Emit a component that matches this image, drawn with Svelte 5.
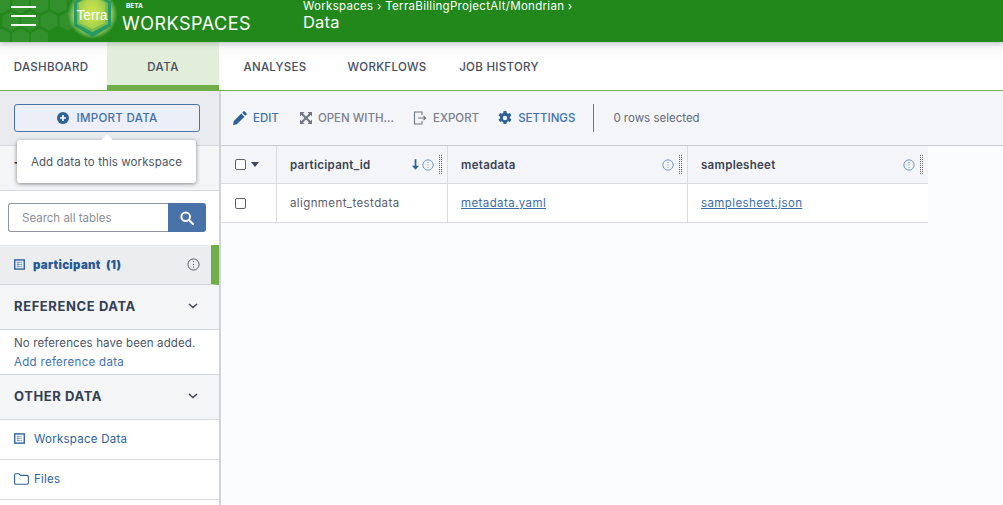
<script>
  const tabs = ['DASHBOARD', 'DATA', 'ANALYSES', 'WORKFLOWS', 'JOB HISTORY'];
  const centers = [
    ...[1.5, 20.5, 39.5, 58.5].map((x) => [x, 4]),
    ...[11, 30, 49, 68].map((x) => [x, 21]),
    ...[1.5, 20.5, 39.5].map((x) => [x, 38])
  ];
  const hexPoints = ([x, y]) =>
    `${x},${y - 9.5} ${x + 8.5},${y - 5} ${x + 8.5},${y + 5} ${x},${y + 9.5} ${x - 8.5},${y + 5} ${x - 8.5},${y - 5}`;
</script>

{#snippet info(color)}
  <svg class="info" viewBox="0 0 14 14" fill="none" stroke={color}>
    <circle cx="7" cy="7" r="6" stroke-width="1"/>
    <path d="M7 3.6v1.1M7 6.4v1.1M7 9.2v1.1" stroke-width="1.2"/>
  </svg>
{/snippet}

{#snippet listIcon()}
  <svg class="list" viewBox="0 0 12 12" fill="none" stroke="#2a5f9c">
    <rect x=".8" y="1" width="10.400" height="10" stroke-width="1.500"/>
    <path d="M3 3.700h6M3 6h6M3 8.300h6M4.300 3v6" stroke-width=".9" stroke-opacity=".6"/>
  </svg>
{/snippet}

{#snippet chevron()}
  <svg class="chev" viewBox="0 0 10 6" fill="none" stroke="#3c4658" stroke-width="1.5"><path d="M1 1l4 3.6L9 1"/></svg>
{/snippet}

{#snippet grip()}<span class="grip"></span>{/snippet}

<div class="page">
  <header class="top">
    <svg class="hexes" viewBox="0 0 110 42" fill="#ffffff14">
      {#each centers as c}
        <polygon points={hexPoints(c)}/>
      {/each}
    </svg>
    <div class="burger"><span></span><span></span><span></span></div>
    <svg class="logo" viewBox="0 0 50 50">
      <defs>
        <radialGradient id="glow"><stop offset=".7" stop-color="#dff08a" stop-opacity=".75"/><stop offset="1" stop-color="#dff08a" stop-opacity="0"/></radialGradient>
        <radialGradient id="lime"><stop offset=".35" stop-color="#c4e04e"/><stop offset="1" stop-color="#a2cf4c"/></radialGradient>
      </defs>
      <circle cx="25.500" cy="25" r="25" fill="url(#glow)"/>
      <polygon points="25.500,2 44,12.500 44,37 25.500,48 7,37 7,12.500" fill="#279a63"/>
      <polygon points="25.500,5 41,14 41,35 25.500,43 10,35 10,14" fill="#76bb50"/>
      <polygon points="25.500,7 38,14 38,34 25.500,40 12,34 12,14" fill="url(#lime)"/>
      <text x="25" y="31" text-anchor="middle" class="logotext">Terra</text>
    </svg>
    <div class="brand">
      <span class="beta">BETA</span>
      <span class="ws">WORKSPACES</span>
    </div>
    <div class="crumbs">
      <span class="path">Workspaces › TerraBillingProjectAlt/Mondrian ›</span>
      <span class="title">Data</span>
    </div>
  </header>

  <nav class="tabs">
    {#each tabs as t}
      <div class="tab" class:active={t === 'DATA'}>{t}</div>
    {/each}
  </nav>

  <div class="body">
    <aside class="side">
      <div class="importbar">
        <button class="import">
          <svg viewBox="0 0 12 12" class="plus"><circle cx="6" cy="6" r="6" fill="#2f6199"/><path d="M6 3v6M3 6h6" stroke="#fff" stroke-width="1.7"/></svg>
          IMPORT DATA
        </button>
        <div class="tip"><i></i>Add data to this workspace</div>
      </div>
      <div class="sect tables">TABLES</div>
      <div class="searchrow">
        <div class="search">
          <div class="input">Search all tables</div>
          <div class="go">
            <svg viewBox="0 0 14 14" fill="none" stroke="#fff" stroke-width="2"><circle cx="5.7" cy="5.7" r="4.3"/><path d="M9 9l4 4" stroke-linecap="round"/></svg>
          </div>
        </div>
      </div>
      <div class="tablerow">
        {@render listIcon()}
        <b>participant&nbsp; (1)</b>
        {@render info('#4a4f58')}
      </div>
      <div class="sect">REFERENCE DATA {@render chevron()}</div>
      <div class="refs">
        <div>No references have been added.</div>
        <div class="link">Add reference data</div>
      </div>
      <div class="sect">OTHER DATA {@render chevron()}</div>
      <div class="item">{@render listIcon()}<span>Workspace Data</span></div>
      <div class="item">
        <svg class="list folder" viewBox="0 0 15 12" fill="none" stroke="#2f6199" stroke-width="1.1"><path d="M.6 2.2q0-1.4 1.4-1.4h3l1.5 1.6h6.4q1.5 0 1.5 1.4v6q0 1.4-1.5 1.4H2q-1.4 0-1.4-1.4z"/></svg>
        <span>Files</span>
      </div>
    </aside>

    <main class="main">
      <div class="toolbar">
        <span class="act first">
          <svg viewBox="0 0 14 14" fill="#2f6199"><path d="M0 14l.7-3.8 7.6-7.6 3.1 3.1-7.6 7.6zM9.2 1.700L10.600.3q.4-.4.9 0l2.200 2.200q.4.4 0 .9l-1.400 1.400z"/></svg>
          EDIT
        </span>
        <span class="act off">
          <svg class="expand" viewBox="0 0 12 12" fill="#6f7580"><path d="M0 0h4.500L3 1.500 6 4.500 9 1.500 7.500 0H12v4.500L10.500 3 7.500 6l3 3L12 7.500V12H7.500L9 10.500l-3-3-3 3L4.500 12H0V7.500L1.500 9l3-3-3-3L0 4.500z"/></svg>
          OPEN WITH...
        </span>
        <span class="act off">
          <svg viewBox="0 0 14 14" fill="none" stroke="#6f7580" stroke-width="1.100"><path d="M9 4V1H1.500v12H9v-3M5 7h7.500M10.500 5l2.200 2-2.200 2"/></svg>
          EXPORT
        </span>
        <span class="act">
          <svg viewBox="0 0 14 14" fill="#2f6199"><path fill-rule="evenodd" d="M5.600 0h2.800l.4 2 1.300.7 1.900-.7 1.400 2.400-1.500 1.300v1.600l1.500 1.300-1.400 2.400-1.900-.7-1.300.7-.4 2H5.600l-.4-2-1.300-.7-1.900.7L.6 8.600l1.500-1.300V5.700L.6 4.400 2 2l1.900.7 1.300-.7zM7 4.800a2.200 2.200 0 1 0 0 4.400 2.200 2.200 0 0 0 0-4.400z"/></svg>
          SETTINGS
        </span>
        <span class="sep"></span>
        <span class="count">0 rows selected</span>
      </div>

      <div class="grid">
        <div class="cell head c0"><span class="box"></span><span class="caret"></span></div>
        <div class="cell head c1"><b>participant_id</b>
          <svg class="sort" viewBox="0 0 8 12" fill="#2f6199"><path d="M3 0h2v7.500h3L4 12 0 7.500h3z"/></svg>
          {@render info('#5c8ac0')}{@render grip()}
        </div>
        <div class="cell head c2"><b>metadata</b>{@render info('#5c8ac0')}{@render grip()}</div>
        <div class="cell head c3"><b>samplesheet</b>{@render info('#5c8ac0')}{@render grip()}</div>
        <div class="cell c0"><span class="box"></span></div>
        <div class="cell c1">alignment_testdata</div>
        <div class="cell c2"><u>metadata.yaml</u></div>
        <div class="cell c3"><u>samplesheet.json</u></div>
      </div>
    </main>
  </div>
</div>

<style>
  :global(body) { margin: 0; background: #fff; }
  .page {
    height: 505px; overflow: hidden; color: #4d5563;
    font-family: Inter, "Liberation Sans", sans-serif; font-size: 11.5px;
    display: flex; flex-direction: column;
  }
  .top {
    position: relative; z-index: 2; height: 42px; flex: none; background: #22881c; color: #fff;
    display: flex; align-items: flex-start; box-shadow: 0 2px 5px #0003; overflow: hidden;
  }
  .hexes { position: absolute; left: 0; top: 0; width: 110px; height: 42px; }
  .burger { position: relative; width: 25px; margin: 6px 1px 0 11px; display: flex; flex-direction: column; gap: 7px; }
  .burger span { height: 2px; background: #fff; }
  .logo { flex: none; width: 50px; height: 50px; margin: -11px 0 0 30px; position: relative; }
  .logotext { font: 14px "Liberation Sans Narrow", "Liberation Sans", sans-serif; fill: #fff; letter-spacing: -.2px; }
  .brand { width: 186px; position: relative; flex: none; }
  .beta { display: block; font-size: 6.5px; font-weight: 700; margin: 3px 0 0 9px; line-height: 6px; }
  .ws { display: block; font-size: 18px; margin: 4px 0 0 5px; letter-spacing: .5px; line-height: 21px; }
  .crumbs { display: flex; flex-direction: column; margin-top: -1px; }
  .path { font-size: 11.5px; line-height: 14px; letter-spacing: .3px; white-space: nowrap; }
  .title { font-size: 16.5px; line-height: 20px; margin-top: -1px; letter-spacing: .2px; }

  .tabs { flex: none; display: flex; height: 49px; box-sizing: border-box; border-bottom: 1px solid #74b04e; background: linear-gradient(#f4f5f7, #fff 40%); }
  .tab { display: flex; align-items: center; justify-content: center; font-size: 11.5px; font-weight: 500; letter-spacing: .3px; color: #444d60; width: 112px; box-sizing: border-box; padding-top: 2px; }
  .tab:nth-child(1) { width: 107px; padding-right: 5px; }
  .active { background: #e1eeda; border-bottom: 6px solid #70ae4a; margin-bottom: -1px; padding-top: 6px; letter-spacing: .5px; }

  .body { flex: 1; display: flex; min-height: 0; }
  .side { width: 219px; flex: none; border-right: 2px solid #d0d3d8; display: flex; flex-direction: column; }
  .importbar { position: relative; z-index: 1; background: #e9ebee; border-bottom: 1px solid #d4d7dc; box-sizing: border-box; padding: 13px 0 0 14px; flex: none; height: 55px; }
  .import {
    width: 186px; height: 28px; box-sizing: border-box; margin: 0; padding: 0; display: flex; align-items: center; justify-content: center; gap: 8px;
    border: 1px solid #4a73a8; border-radius: 3px; background: #eceff7; color: #3f6ea6; font: 500 11.5px Inter, sans-serif; letter-spacing: .3px;
  }
  .plus { width: 12px; height: 12px; }
  .tip {
    position: absolute; left: 17px; top: 49px; width: 179px; height: 43px; box-sizing: border-box; background: #fff; letter-spacing: .1px;
    border-radius: 3px; box-shadow: 0 1px 4px #0007; display: flex; align-items: center; justify-content: center; font-size: 11.5px; color: #4d5563;
  }
  .tip i { position: absolute; left: 86px; top: -4px; width: 8px; height: 8px; background: #fff; transform: rotate(45deg); }
  .sect {
    height: 45px; flex: none; box-sizing: border-box; background: #f4f5f7; border-bottom: 1px solid #d4d7dc; display: flex; align-items: center; justify-content: space-between;
    padding: 0 21px 3px 14px; font-size: 13px; font-weight: 700; letter-spacing: .6px; color: #333f52;
  }
  .searchrow { height: 54px; flex: none; box-sizing: border-box; padding: 12px 13px 0 8px; }
  .search { display: flex; height: 29px; }
  .input { flex: 1; box-sizing: border-box; border: 1px solid #8d95a3; border-right: 0; border-radius: 3px 0 0 3px; padding: 1px 0 0 13px; line-height: 27px; color: #8b8f96; }
  .go { width: 38px; background: #4872a8; border-radius: 0 3px 3px 0; display: flex; align-items: center; justify-content: center; }
  .go svg { width: 14px; height: 14px; }
  .tablerow { height: 40px; flex: none; box-sizing: border-box; background: #ecedef; border-right: 8px solid #70ae4a; border-bottom: 1px solid #d4d7dc; display: flex; align-items: center; padding: 0 11px 0 14px; color: #275a94; font-weight: 700; letter-spacing: .3px; }
  .tablerow b { flex: 1; }
  .list { width: 11px; height: 11px; margin-right: 8px; flex: none; }
  .folder { width: 15px; height: 12px; margin-right: 5px; }
  .info { width: 12px; height: 12px; flex: none; }
  .tablerow .info { width: 13px; height: 13px; }
  .chev { width: 10px; height: 6px; }
  .refs { height: 45px; flex: none; box-sizing: border-box; padding: 4px 14px 0; border-bottom: 1px solid #d4d7dc; line-height: 19px; letter-spacing: .12px; }
  .link { color: #4272ab; letter-spacing: .3px; }
  .item { height: 40px; flex: none; box-sizing: border-box; border-bottom: 1px solid #d4d7dc; display: flex; align-items: center; padding: 0 0 2px 14px; color: #2f6199; letter-spacing: .25px; }
  .item .list:not(.folder) { margin-right: 9px; }

  .main { flex: 1; min-width: 0; display: flex; flex-direction: column; background: #fbfcfd; }
  .toolbar { height: 55px; flex: none; box-sizing: border-box; background: #f4f5f8; border-bottom: 1px solid #c9ccd0; display: flex; align-items: center; padding-left: 12px; }
  .act { display: flex; align-items: center; gap: 6px; color: #4272ab; font-weight: 500; font-size: 11.5px; margin-right: 19px; white-space: nowrap; }
  .act.first { margin-right: 20px; }
  .act.off { color: #7b808a; }
  .act svg { width: 14px; height: 14px; }
  .act svg.expand { width: 12px; height: 12px; margin-left: 1px; }
  .sep { width: 1px; height: 28px; background: #6c7683; margin-left: -1px; }
  .count { margin-left: 19px; color: #626a77; }

  .grid { display: grid; grid-template-columns: 56px 171px 240px 240px; width: 707px; grid-template-rows: 38px 39px; letter-spacing: .4px; }
  .cell { display: flex; align-items: center; box-sizing: border-box; background: #fff; border-right: 1px solid #d9dbdf; border-bottom: 1px solid #d9dbdf; padding-left: 13px; color: #5a606b; }
  .cell:nth-child(4), .cell:nth-child(8) { border-right: 0; }
  .head { background: #f4f5f8; color: #3a4252; padding-right: 4px; }
  .head b { flex: 1; font-weight: 600; letter-spacing: .3px; }
  .c0 { padding-left: 14px; }
  .box { width: 11px; height: 11px; box-sizing: border-box; border: 1px solid #5a6270; border-radius: 2px; background: #fff; }
  .caret { margin-left: 5px; border: 4px solid transparent; border-top: 5px solid #3c4658; border-bottom: 0; }
  .sort { width: 7px; height: 11px; margin-right: 3px; }
  .grip { width: 5px; height: 19px; margin-left: 4px; background: conic-gradient(#666 25%, transparent 0) 0 0 / 2px 2px; }
  u { color: #3d6ea8; }
</style>
